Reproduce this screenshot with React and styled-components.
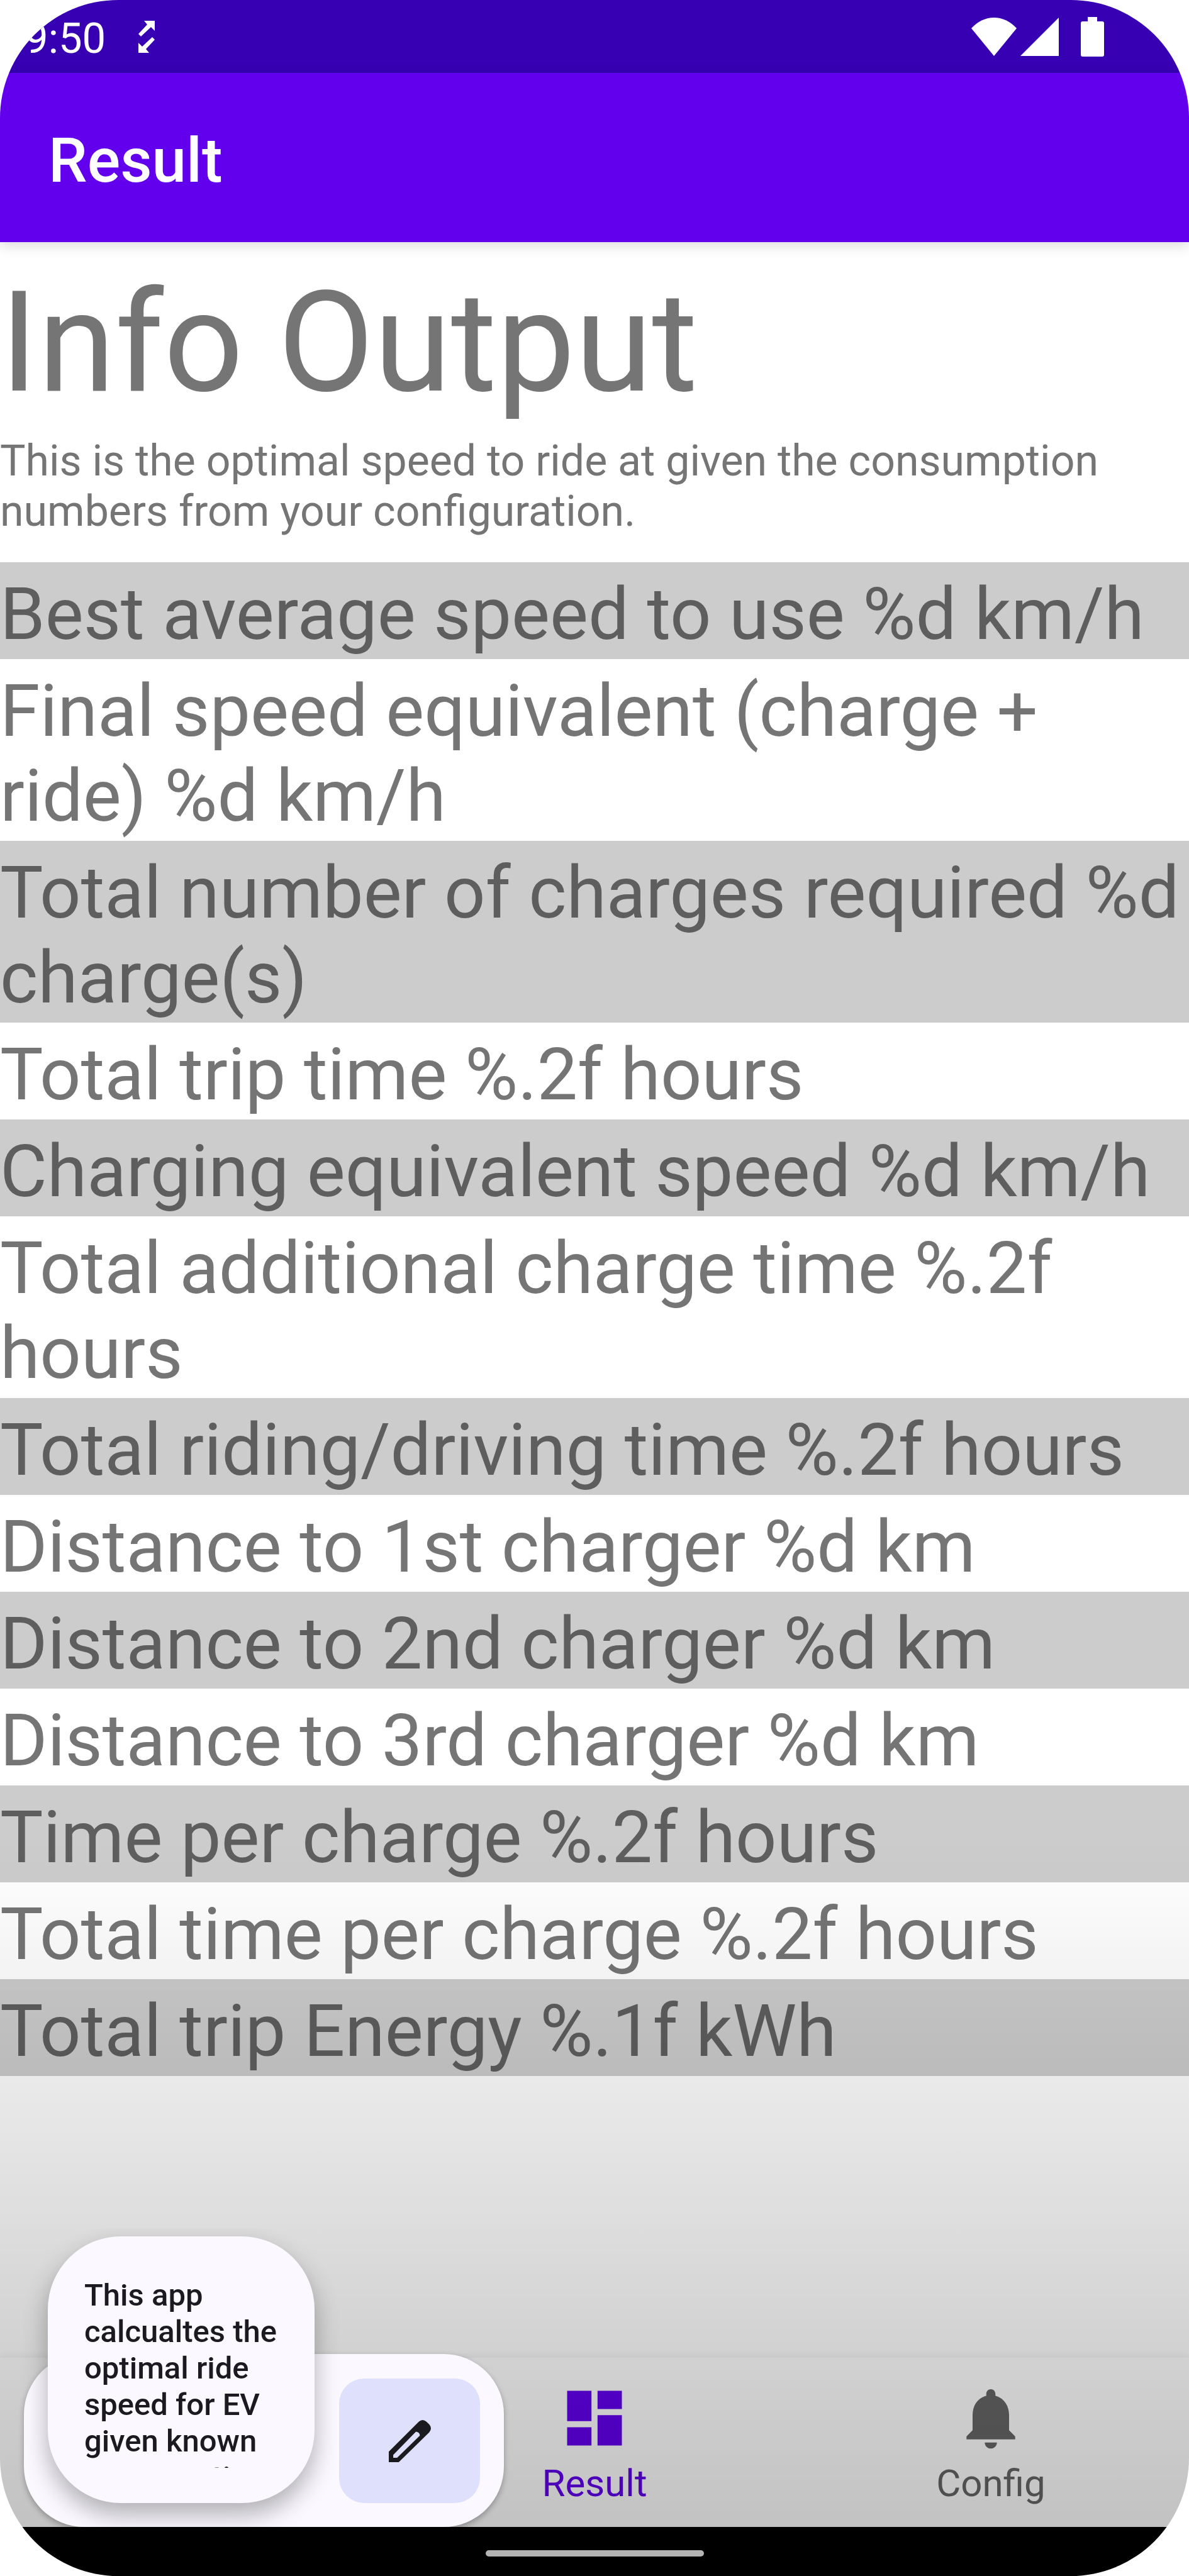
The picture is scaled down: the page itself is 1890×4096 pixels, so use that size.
import React from "react";
import styled, { createGlobalStyle } from "styled-components";

const GlobalStyle = createGlobalStyle`
  *, *::before, *::after { box-sizing: border-box; }
  body { margin: 0; background: #ffffff; font-family: Roboto, "Noto Sans", sans-serif; }
  h1, h2, p, ul { margin: 0; padding: 0; font-weight: 400; }
`;

const Screen = styled.div`
  position: relative;
  display: flex;
  flex-direction: column;
  min-height: 100vh;
  overflow: hidden;
  border-radius: 188px;
  background: #ffffff;
`;

const StatusBar = styled.div`
  display: flex;
  align-items: center;
  justify-content: space-between;
  height: 116px;
  padding: 0 135px 0 39px;
  background: #3700b3;
  color: #ffffff;
`;

const StatusGroup = styled.div`
  display: flex;
  align-items: center;
  gap: ${(p) => p.$gap}px;
`;

const Clock = styled.time`
  padding-top: 6px;
  font-size: 67px;
  line-height: 80px;
`;

const AppBar = styled.header`
  position: relative;
  display: flex;
  align-items: center;
  height: 269px;
  padding: 10px 77px 0;
  background: #6200ee;
  box-shadow: 0 6px 20px rgba(0, 0, 0, 0.14);
`;

const AppTitle = styled.h1`
  color: #ffffff;
  font-size: 98px;
  font-weight: 500;
  line-height: 112px;
`;

const Content = styled.main`
  flex: 1;
  color: #757575;
`;

const Intro = styled.section`
  display: flex;
  flex-direction: column;
  gap: 18px;
  padding: 30px 0 41px;
`;

const Heading = styled.h2`
  font-size: 222px;
  line-height: 260px;
`;

const Lead = styled.p`
  font-size: 68px;
  line-height: 80px;
`;

const ResultList = styled.ul`
  list-style: none;
`;

const ResultRow = styled.li`
  padding: 15px 0 4px;
  font-size: 115px;
  line-height: 135px;
  &:nth-child(odd) {
    background: #cccccc;
    color: #5e5e5e;
  }
`;

const BottomNav = styled.nav`
  display: grid;
  grid-template-columns: repeat(3, 1fr);
  height: 269px;
  box-shadow: 0 0 14px rgba(0, 0, 0, 0.09);
  background: #ffffff;
`;

const NavItem = styled.a`
  grid-column: ${(p) => p.$column};
  display: flex;
  flex-direction: column;
  align-items: center;
  gap: 12px;
  padding-top: 38px;
  color: ${(p) => (p.$active ? "#6200ee" : "#666666")};
  font-size: 60px;
  line-height: 68px;
  text-decoration: none;
`;

const Shade = styled.div`
  position: absolute;
  left: 0;
  right: 0;
  bottom: 78px;
  height: 1090px;
  background: linear-gradient(rgba(0, 0, 0, 0), rgba(0, 0, 0, 0.24));
  pointer-events: none;
`;

const GestureBar = styled.footer`
  display: flex;
  justify-content: center;
  align-items: center;
  height: 78px;
  padding-top: 6px;
  background: #000000;
`;

const GestureHandle = styled.div`
  width: 347px;
  height: 10px;
  border-radius: 5px;
  background: #b3b3b3;
`;

const ClipboardCard = styled.aside`
  position: absolute;
  left: 38px;
  bottom: 78px;
  display: flex;
  align-items: flex-end;
  justify-content: space-between;
  width: 763px;
  height: 275px;
  padding: 38px;
  border-radius: 96px;
  background: #fbf9ff;
  box-shadow: 0 4px 10px rgba(0, 0, 0, 0.28);
  clip-path: inset(-200px -40px 0 -40px);
`;

const Preview = styled.div`
  width: 424px;
  height: 424px;
  padding: 58px 54px 56px 58px;
  border-radius: 116px;
  background: #fbf9ff;
  box-shadow: 0 18px 38px rgba(0, 0, 0, 0.3);
`;

const PreviewText = styled.p`
  height: 310px;
  padding-top: 7px;
  overflow: hidden;
  color: #1b1b1f;
  font-size: 49px;
  font-weight: 500;
  line-height: 58px;
`;

const EditButton = styled.button`
  display: flex;
  align-items: center;
  justify-content: center;
  width: 224px;
  height: 198px;
  padding: 0;
  border: 0;
  border-radius: 40px;
  background: #dfe0fb;
  color: #1b1b1f;
`;

const results = [
  "Best average speed to use %d km/h",
  "Final speed equivalent (charge + ride) %d km/h",
  "Total number of charges required %d charge(s)",
  "Total trip time %.2f hours",
  "Charging equivalent speed %d km/h",
  "Total additional charge time %.2f hours",
  "Total riding/driving time %.2f hours",
  "Distance to 1st charger %d km",
  "Distance to 2nd charger %d km",
  "Distance to 3rd charger %d km",
  "Time per charge %.2f hours",
  "Total time per charge %.2f hours",
  "Total trip Energy %.1f kWh",
];

const NavIcon = ({ d }) => (
  <svg width="116" height="116" viewBox="0 0 24 24" fill="currentColor" aria-hidden="true">
    <path d={d} />
  </svg>
);

const dashboardPath = "M3 13h8V3H3v10zm0 8h8v-6H3v6zm10 0h8V11h-8v10zm0-18v6h8V3h-8z";
const bellPath =
  "M12 22c1.1 0 2-.9 2-2h-4c0 1.1.89 2 2 2zm6-6v-5c0-3.07-1.64-5.64-4.5-6.32V4c0-.83-.67-1.5-1.5-1.5s-1.5.67-1.5 1.5v.68C7.63 5.36 6 7.92 6 11v5l-2 2v1h16v-1l-2-2z";

export default function App() {
  return (
    <>
      <GlobalStyle />
      <Screen>
        <StatusBar>
          <StatusGroup $gap={52}>
            <Clock>9:50</Clock>
            <svg width="26" height="51" viewBox="0 0 26 51" fill="#fff" aria-hidden="true">
              <path d="M9 0h17v16l-6-6L4 25 0 21 14 6zM17 51H0V35l6 6 16-15 4 4-14 15z" />
            </svg>
          </StatusGroup>
          <StatusGroup $gap={6}>
            <svg width="72" height="61" viewBox="0 0 72 61" fill="#fff" aria-hidden="true">
              <path d="M0 17Q16 0 36 0T72 17L36 61z" />
            </svg>
            <svg width="61" height="61" viewBox="0 0 61 61" fill="#fff" aria-hidden="true">
              <path d="M0 61L61 0v61z" />
            </svg>
            <svg width="66" height="63" viewBox="0 0 66 63" fill="#fff" aria-hidden="true">
              <path d="M29 10q0-3 3-3h8V0h15v7h8q3 0 3 3v50q0 3-3 3H32q-3 0-3-3z" />
            </svg>
          </StatusGroup>
        </StatusBar>
        <AppBar>
          <AppTitle>Result</AppTitle>
        </AppBar>
        <Content>
          <Intro>
            <Heading>Info Output</Heading>
            <Lead>
              This is the optimal speed to ride at given the consumption numbers from your
              configuration.
            </Lead>
          </Intro>
          <ResultList>
            {results.map((text) => (
              <ResultRow key={text}>{text}</ResultRow>
            ))}
          </ResultList>
        </Content>
        <BottomNav>
          <NavItem href="#result" $column={2} $active>
            <NavIcon d={dashboardPath} />
            Result
          </NavItem>
          <NavItem href="#config" $column={3}>
            <NavIcon d={bellPath} />
            Config
          </NavItem>
        </BottomNav>
        <GestureBar>
          <GestureHandle />
        </GestureBar>
        <Shade />
        <ClipboardCard>
          <Preview>
            <PreviewText>
              This app calcualtes the optimal ride speed for EV given known consumption
            </PreviewText>
          </Preview>
          <EditButton type="button" aria-label="Edit">
            <svg width="67" height="67" viewBox="0 0 76 76" fill="currentColor" aria-hidden="true">
              <path
                fillRule="evenodd"
                d="M0 57L54 3Q61-3 68 3l5 5q6 7 0 14L18 76H0zM8 63v5h7L56 28q0-6-7-7z"
              />
            </svg>
          </EditButton>
        </ClipboardCard>
      </Screen>
    </>
  );
}
